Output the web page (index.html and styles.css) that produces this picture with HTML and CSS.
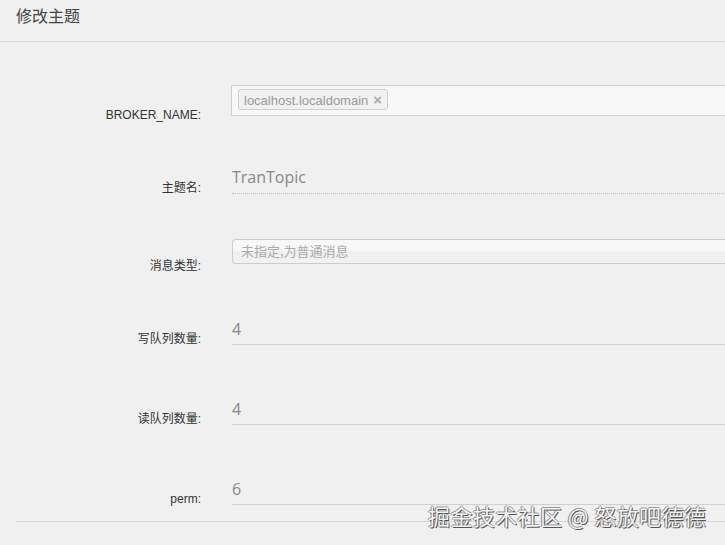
FILE: index.html
```html
<!DOCTYPE html>
<html lang="zh-CN">
<head>
<meta charset="utf-8">
<title>修改主题</title>
<link rel="stylesheet" href="styles.css">
</head>
<body>
<div class="page">
  <div class="header"><span class="title">修改主题</span></div>
  <div class="form">
    <div class="row row-broker">
      <label class="label">BROKER_NAME:</label>
      <div class="tagbox"><span class="tag">localhost.localdomain<span class="x">×</span></span></div>
    </div>
    <div class="row row-topic">
      <label class="label">主题名:</label>
      <div class="field dotted">TranTopic</div>
    </div>
    <div class="row row-type">
      <label class="label">消息类型:</label>
      <div class="select">未指定,为普通消息</div>
    </div>
    <div class="row row-num first">
      <label class="label">写队列数量:</label>
      <div class="field">4</div>
    </div>
    <div class="row row-num">
      <label class="label">读队列数量:</label>
      <div class="field">4</div>
    </div>
    <div class="row row-num">
      <label class="label">perm:</label>
      <div class="field">6</div>
    </div>
  </div>
  <div class="divider"></div>
  <div class="watermark">掘金技术社区 @ 怒放吧德德</div>
</div>
</body>
</html>
```

FILE: styles.css
```css
html, body {
  margin: 0;
  padding: 0;
  background: #f0f0f0;
  overflow: hidden;
}
body {
  width: 725px;
  height: 545px;
  font-family: "Liberation Sans", "Noto Sans CJK SC", sans-serif;
}
.page {
  position: relative;
  width: 725px;
  height: 545px;
  overflow: hidden;
}
.header {
  height: 42px;
  border-bottom: 1px solid #dcdcdc;
  padding-left: 16px;
  box-sizing: border-box;
}
.title {
  display: block;
  font-family: "Noto Sans CJK SC", sans-serif;
  font-size: 16px;
  line-height: 30px;
  color: #444;
}
.form {
  width: 800px;
}
.row {
  display: grid;
  grid-template-columns: 201px 1fr;
  column-gap: 31px;
}
.label {
  align-self: end;
  text-align: right;
  font-size: 12px;
  line-height: 16px;
  color: #333;
  margin-bottom: -1px;
  font-family: "Liberation Sans", "Noto Sans CJK SC", sans-serif;
}
.row-broker {
  margin-top: 43px;
  height: 37px;
}
.tagbox {
  align-self: start;
  height: 31px;
  box-sizing: border-box;
  border: 1px solid #d0d0d0;
  border-right: none;
  background: #f8f8f8;
  padding: 3px 0 0 6px;
  margin-left: -1px;
}
.tag {
  display: inline-block;
  height: 21px;
  box-sizing: border-box;
  border: 1px solid #cfcfcf;
  border-radius: 3px;
  background: #f1f1f1;
  padding: 0 5px 0 5px;
  font-size: 13px;
  line-height: 19px;
  color: #999;
}
.tag .x {
  margin-left: 5px;
  font-weight: bold;
  color: #aaa;
  font-size: 15px;
}
.field {
  align-self: start;
  font-family: "Open Sans", "Noto Sans CJK SC", sans-serif;
  font-size: 16px;
  line-height: 22px;
  color: #888;
  padding-bottom: 4px;
  border-bottom: 1px solid #d0d0d0;
}
.field.dotted {
  border-bottom: 1px dotted #bdbdbd;
  padding-bottom: 5px;
}
.row-topic {
  margin-top: 44px;
  height: 29px;
}
.row-type {
  margin-top: 44px;
  height: 34px;
}
.select {
  align-self: start;
  height: 25px;
  box-sizing: border-box;
  border: 1px solid #cccccc;
  border-right: none;
  border-radius: 4px 0 0 4px;
  background: linear-gradient(#f8f8f8 0%, #f8f8f8 45%, #efefef 55%, #f2f2f2 100%);
  padding-left: 8px;
  font-family: "Noto Sans CJK SC", sans-serif;
  font-size: 13px;
  line-height: 22px;
  color: #aaa;
}
.row-num {
  margin-top: 52px;
  height: 28px;
}
.row-num.first {
  margin-top: 45px;
}
.divider {
  margin: 15px 0 0 16px;
  height: 0;
  border-top: 1px solid #d6d6d6;
}
.watermark {
  position: absolute;
  left: 428px;
  top: 501px;
  font-family: "Noto Sans CJK SC", sans-serif;
  font-size: 22px;
  line-height: 28px;
  color: #f4f4f4;
  letter-spacing: 0.4px;
  text-shadow: 1px 1px 0 #555, -1px 0 0 #888, 0 -1px 0 #999;
  white-space: nowrap;
}
```
